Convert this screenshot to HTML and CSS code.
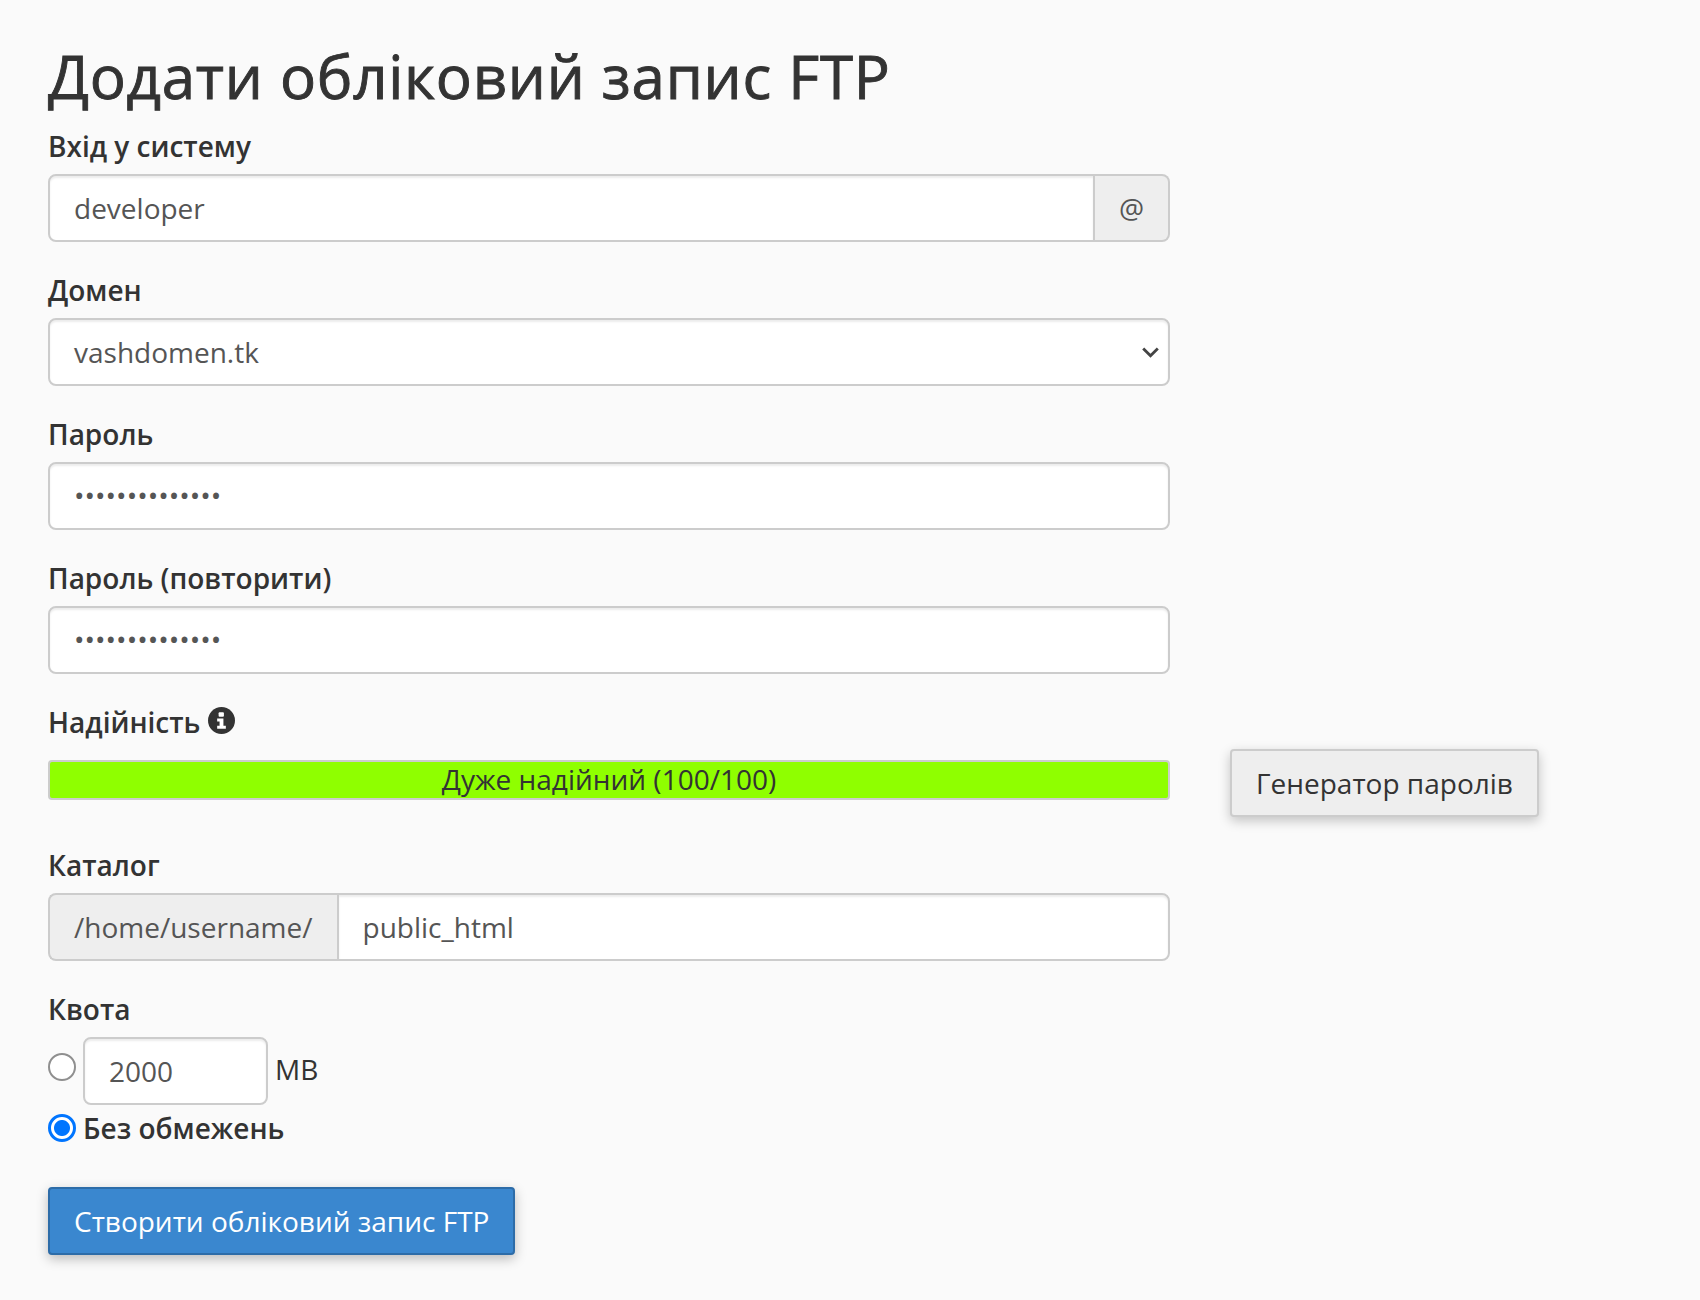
FILE: index.html
```html
<!DOCTYPE html>
<html lang="uk">
<head>
<meta charset="utf-8">
<title>Додати обліковий запис FTP</title>
<link rel="stylesheet" href="styles.css">
</head>
<body>
<main class="page">
  <h1 class="title">Додати обліковий запис FTP</h1>
  <div class="narrow">
    <div class="field">
      <label class="label">Вхід у систему</label>
      <div class="group">
        <div class="input grow">developer</div>
        <div class="addon addon-right">@</div>
      </div>
    </div>
    <div class="field">
      <label class="label">Домен</label>
      <div class="input select">vashdomen.tk
        <svg class="chevron" viewBox="0 0 17 11" width="17" height="11"><path d="M1.200 1.500 L8.500 8.800 L15.800 1.500" fill="none" stroke="#444" stroke-width="2.800"/></svg>
      </div>
    </div>
    <div class="field">
      <label class="label">Пароль</label>
      <div class="input dots">••••••••••••••</div>
    </div>
    <div class="field">
      <label class="label">Пароль (повторити)</label>
      <div class="input dots">••••••••••••••</div>
    </div>
  </div>
  <div class="strength-row">
    <div class="narrow">
      <label class="label">Надійність
        <svg class="info" viewBox="0 0 28 28" width="27" height="27"><circle cx="14" cy="14" r="14" fill="#333"/><rect x="11" y="5.500" width="5.500" height="4.500" rx="1" fill="#fff"/><path d="M9.500 12h6.500v7.500h2.500v3h-9v-3h2.500v-4.500h-2.500z" fill="#fff"/></svg>
      </label>
      <div class="meter">Дуже надійний (100/100)</div>
    </div>
    <button class="btn btn-default" type="button">Генератор паролів</button>
  </div>
  <div class="narrow">
    <div class="field">
      <label class="label">Каталог</label>
      <div class="group">
        <div class="addon addon-left">/home/username/</div>
        <div class="input grow">public_html</div>
      </div>
    </div>
    <div class="field quota">
      <label class="label">Квота</label>
      <div class="quota-row">
        <span class="radio"></span>
        <div class="input small">2000</div>
        <span class="unit">MB</span>
      </div>
      <div class="quota-row unlimited">
        <span class="radio checked"></span>
        <span class="radio-label">Без обмежень</span>
      </div>
    </div>
  </div>
  <button class="btn btn-primary" type="button">Створити обліковий запис FTP</button>
</main>
</body>
</html>
```
FILE: styles.css
```css
* { box-sizing: border-box; }
html, body { margin: 0; height: 100%; }
body {
  background: #fafafa;
  color: #333;
  font-family: "Open Sans", "Noto Sans", sans-serif;
  font-size: 28px;
  line-height: 40px;
}
.page { padding: 37px 48px 0; }
.title {
  margin: 0 0 11px;
  font-size: 60px;
  font-weight: 400;
  letter-spacing: .72px;
  -webkit-text-stroke: .9px #333;
  line-height: 78px;
}
.narrow { width: 1122px; }
.field { margin-bottom: 28px; }
.label {
  display: block;
  font-weight: 600;
  margin-bottom: 8px;
}
.input {
  height: 68px;
  padding: 12px 24px;
  background: #fff;
  border: 2px solid #ccc;
  border-radius: 8px;
  color: #555;
  box-shadow: inset 0 2px 2px rgba(0,0,0,.075);
}
.dots { padding-top: 11px; }
.group { display: flex; }
.grow { flex: 1; }
.addon {
  padding: 12px 24px;
  height: 68px;
  background: #eee;
  border: 2px solid #ccc;
  color: #555;
}
.addon-right { border-left: 0; border-radius: 0 8px 8px 0; }
.addon-left { border-right: 0; border-radius: 8px 0 0 8px; }
.group .input:first-child { border-radius: 8px 0 0 8px; }
.group .input:last-child { border-radius: 0 8px 8px 0; }
.select { display: flex; align-items: center; justify-content: space-between; padding-right: 9px; }
.info { vertical-align: -1px; }
.strength-row { display: flex; align-items: flex-start; gap: 60px; margin-bottom: 28px; }
.meter {
  height: 40px;
  margin-top: 18px;
  background: #8fff00;
  border: 2px solid #ccc;
  border-radius: 4px;
  text-align: center;
  color: #333;
  line-height: 34px;
}
.btn {
  font: inherit;
  height: 68px;
  padding: 0 24px;
  border-radius: 4px;
  cursor: pointer;
}
.strength-row .btn { margin-top: 47px; }
.btn-default {
  background: #eee;
  border: 2px solid #ccc;
  color: #333;
  box-shadow: 0 4px 12px rgba(0,0,0,.22);
}
.btn-primary {
  background: #3a87cf;
  border: 2px solid #2d6ca8;
  color: #fff;
  box-shadow: 0 4px 12px rgba(0,0,0,.25);
}
.quota { margin-bottom: 39px; }
.quota-row { display: flex; align-items: center; gap: 7px; }
.small { width: 185px; }
.radio {
  width: 28px;
  height: 28px;
  border-radius: 50%;
  border: 2px solid #8f8f8f;
  background: #fff;
  margin-bottom: 8px;
}
.radio.checked {
  border: 3px solid #0075ff;
  background: radial-gradient(circle, #0075ff 0 7.500px, #fff 8.500px);
  margin-bottom: 0;
}
.radio-label { font-weight: 600; }
.unlimited { margin-top: 3px; }
.unit { margin-bottom: 4px; }
```
